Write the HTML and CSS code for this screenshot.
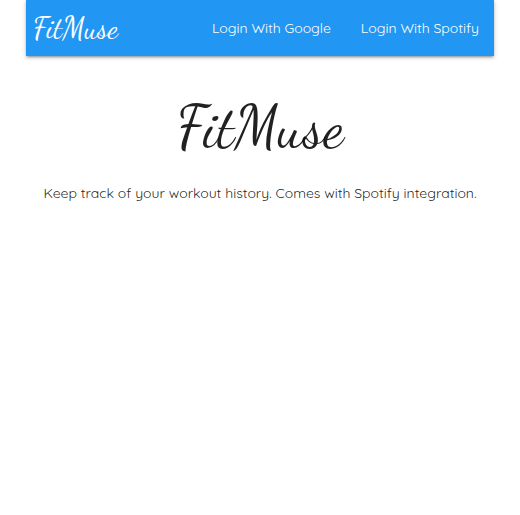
FILE: index.html
```html
<!DOCTYPE html>
<html lang="en">
<head>
<meta charset="utf-8">
<meta name="viewport" content="width=device-width, initial-scale=1">
<title>FitMuse</title>
<link rel="stylesheet" href="styles.css">
</head>
<body>
<div class="container">
  <nav class="navbar">
    <a class="brand" href="#">FitMuse</a>
    <ul class="links">
      <li><a href="#">Login With Google</a></li>
      <li><a href="#">Login With Spotify</a></li>
    </ul>
  </nav>
  <main class="hero">
    <h1 class="title">FitMuse</h1>
    <p class="tagline">Keep track of your workout history. Comes with Spotify integration.</p>
  </main>
</div>
</body>
</html>
```
FILE: styles.css
```css
body {
  margin: 0;
  background: #fff;
  color: rgba(0, 0, 0, 0.87);
  font-family: Quicksand, Lato, sans-serif;
  font-size: 14px;
  line-height: 22px;
}

.container {
  width: 90%;
  margin: 0 auto;
}

.navbar {
  display: flex;
  justify-content: space-between;
  align-items: center;
  height: 56px;
  background: #2196f3;
  box-shadow: 0 2px 2px 0 rgba(0, 0, 0, 0.14), 0 3px 1px -2px rgba(0, 0, 0, 0.12), 0 1px 5px 0 rgba(0, 0, 0, 0.2);
}

.navbar a {
  color: #fff;
  text-decoration: none;
}

.brand,
.title {
  font-family: "Dancing Script", "Liberation Serif", cursive;
  font-weight: 400;
}

.brand {
  padding: 0 7px;
  font-size: 30px;
}

.links {
  display: flex;
  margin: 0;
  padding: 0;
  list-style: none;
}

.links a {
  padding: 0 15px;
}

.hero {
  text-align: center;
}

.title {
  margin: 40px 0 22px;
  font-size: 59px;
  line-height: 64px;
}

.tagline {
  margin: 0;
}
```
